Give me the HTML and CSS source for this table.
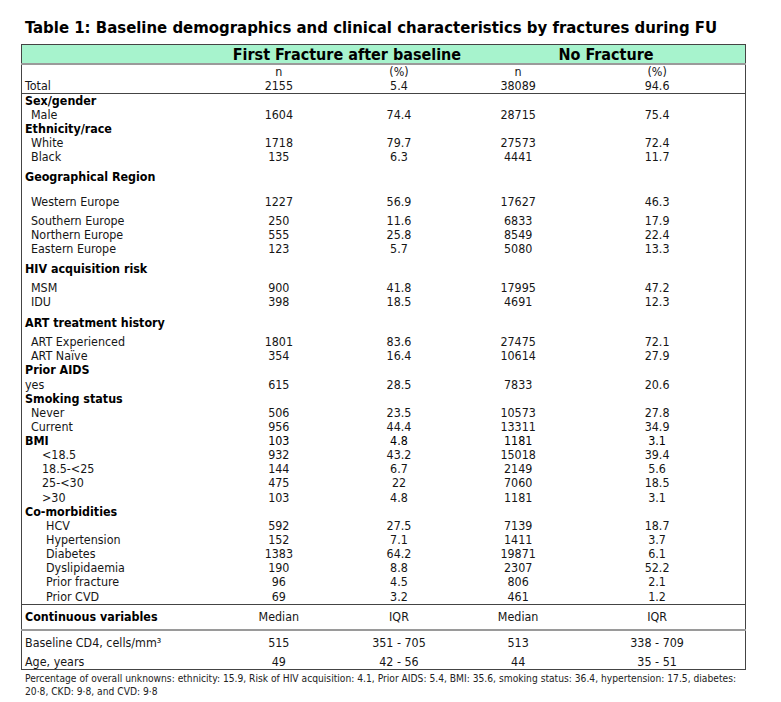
FILE: index.html
```html
<!DOCTYPE html>
<html>
<head>
<meta charset="utf-8">
<link rel="stylesheet" href="styles.css">
</head>
<body>
<div class="page">
  <h1 class="title">Table 1: Baseline demographics and clinical characteristics by fractures during FU</h1>
  <table class="tbl">
    <colgroup>
      <col class="c-label"><col class="c-n1"><col class="c-p1"><col class="c-n2"><col class="c-p2">
    </colgroup>
    <tr class="head">
      <td></td>
      <td colspan="2">First Fracture after baseline</td>
      <td colspan="2">No Fracture</td>
    </tr>
    <tr class="r14"><td></td><td>n</td><td>(%)</td><td>n</td><td>(%)</td></tr>
    <tr class="r14 total"><td class="lab">Total</td><td>2155</td><td>5.4</td><td>38089</td><td>94.6</td></tr>
    <tr class="r14 sec"><td class="lab">Sex/gender</td><td></td><td></td><td></td><td></td></tr>
    <tr class="r14"><td class="lab i1">Male</td><td>1604</td><td>74.4</td><td>28715</td><td>75.4</td></tr>
    <tr class="r14 sec"><td class="lab">Ethnicity/race</td><td></td><td></td><td></td><td></td></tr>
    <tr class="r14"><td class="lab i1">White</td><td>1718</td><td>79.7</td><td>27573</td><td>72.4</td></tr>
    <tr class="r20"><td class="lab i1">Black</td><td>135</td><td>6.3</td><td>4441</td><td>11.7</td></tr>
    <tr class="r25 sec"><td class="lab">Geographical Region</td><td></td><td></td><td></td><td></td></tr>
    <tr class="r19"><td class="lab i1">Western Europe</td><td>1227</td><td>56.9</td><td>17627</td><td>46.3</td></tr>
    <tr class="r14"><td class="lab i1">Southern Europe</td><td>250</td><td>11.6</td><td>6833</td><td>17.9</td></tr>
    <tr class="r14"><td class="lab i1">Northern Europe</td><td>555</td><td>25.8</td><td>8549</td><td>22.4</td></tr>
    <tr class="r20"><td class="lab i1">Eastern Europe</td><td>123</td><td>5.7</td><td>5080</td><td>13.3</td></tr>
    <tr class="r19 sec"><td class="lab">HIV acquisition risk</td><td></td><td></td><td></td><td></td></tr>
    <tr class="r14"><td class="lab i1">MSM</td><td>900</td><td>41.8</td><td>17995</td><td>47.2</td></tr>
    <tr class="r21"><td class="lab i1">IDU</td><td>398</td><td>18.5</td><td>4691</td><td>12.3</td></tr>
    <tr class="r19 sec"><td class="lab">ART treatment history</td><td></td><td></td><td></td><td></td></tr>
    <tr class="r14"><td class="lab i1">ART Experienced</td><td>1801</td><td>83.6</td><td>27475</td><td>72.1</td></tr>
    <tr class="r14"><td class="lab i1">ART Naïve</td><td>354</td><td>16.4</td><td>10614</td><td>27.9</td></tr>
    <tr class="r15 sec"><td class="lab">Prior AIDS</td><td></td><td></td><td></td><td></td></tr>
    <tr class="r14"><td class="lab">yes</td><td>615</td><td>28.5</td><td>7833</td><td>20.6</td></tr>
    <tr class="r14 sec"><td class="lab">Smoking status</td><td></td><td></td><td></td><td></td></tr>
    <tr class="r14"><td class="lab i1">Never</td><td>506</td><td>23.5</td><td>10573</td><td>27.8</td></tr>
    <tr class="r14"><td class="lab i1">Current</td><td>956</td><td>44.4</td><td>13311</td><td>34.9</td></tr>
    <tr class="r14 sec"><td class="lab">BMI</td><td>103</td><td>4.8</td><td>1181</td><td>3.1</td></tr>
    <tr class="r14"><td class="lab i2">&lt;18.5</td><td>932</td><td>43.2</td><td>15018</td><td>39.4</td></tr>
    <tr class="r14"><td class="lab i2">18.5-&lt;25</td><td>144</td><td>6.7</td><td>2149</td><td>5.6</td></tr>
    <tr class="r15"><td class="lab i2">25-&lt;30</td><td>475</td><td>22</td><td>7060</td><td>18.5</td></tr>
    <tr class="r14"><td class="lab i2">&gt;30</td><td>103</td><td>4.8</td><td>1181</td><td>3.1</td></tr>
    <tr class="r14 sec"><td class="lab">Co-morbidities</td><td></td><td></td><td></td><td></td></tr>
    <tr class="r14"><td class="lab i3">HCV</td><td>592</td><td>27.5</td><td>7139</td><td>18.7</td></tr>
    <tr class="r14"><td class="lab i3">Hypertension</td><td>152</td><td>7.1</td><td>1411</td><td>3.7</td></tr>
    <tr class="r14"><td class="lab i3">Diabetes</td><td>1383</td><td>64.2</td><td>19871</td><td>6.1</td></tr>
    <tr class="r14"><td class="lab i3">Dyslipidaemia</td><td>190</td><td>8.8</td><td>2307</td><td>52.2</td></tr>
    <tr class="r15"><td class="lab i3">Prior fracture</td><td>96</td><td>4.5</td><td>806</td><td>2.1</td></tr>
    <tr class="r14 lastcat"><td class="lab i3">Prior CVD</td><td>69</td><td>3.2</td><td>461</td><td>1.2</td></tr>
    <tr class="cont"><td class="lab sec">Continuous variables</td><td>Median</td><td>IQR</td><td>Median</td><td>IQR</td></tr>
    <tr class="cd4"><td class="lab">Baseline CD4, cells/mm³</td><td>515</td><td>351 - 705</td><td>513</td><td>338 - 709</td></tr>
    <tr class="age"><td class="lab">Age, years</td><td>49</td><td>42 - 56</td><td>44</td><td>35 - 51</td></tr>
  </table>
  <p class="note">Percentage of overall unknowns: ethnicity: 15.9, Risk of HIV acquisition: 4.1, Prior AIDS: 5.4, BMI: 35.6, smoking status: 36.4, hypertension: 17.5, diabetes: 20·8, CKD: 9·8, and CVD: 9·8</p>
</div>
</body>
</html>
```
FILE: styles.css
```css
html, body {
  margin: 0;
  padding: 0;
  background: #fff;
}
.page {
  padding-left: 21px;
  color: #161616;
  font-family: "DejaVu Sans Condensed", "DejaVu Sans", sans-serif;
  font-stretch: condensed;
}
.title {
  margin: 0;
  padding: 18px 0 0 4px;
  height: 44px;
  box-sizing: border-box;
  font-size: 16.6px;
  line-height: 20px;
  font-weight: bold;
  color: #000;
}
.tbl {
  border-collapse: collapse;
  table-layout: fixed;
  width: 725px;
  border: 1px solid #444;
  font-size: 12.4px;
}
.c-label { width: 205px; }
.c-n1 { width: 104px; }
.c-p1 { width: 136px; }
.c-n2 { width: 102px; }
.c-p2 { width: 176px; }
.tbl td {
  padding: 0;
  text-align: center;
  vertical-align: top;
  line-height: 14px;
  white-space: nowrap;
}
.tbl td.lab {
  text-align: left;
  padding-left: 3px;
}
.head td {
  background: #a7f3cd;
  height: 17px;
  padding-top: 1px;
  font-weight: bold;
  font-size: 16px;
  line-height: 17px;
  vertical-align: middle;
  color: #000;
  border-bottom: 2px solid #9a9a9a;
}
.r14 td { height: 14px; }
.r15 td { height: 15px; }
.r19 td { height: 19px; }
.r20 td { height: 20px; }
.r21 td { height: 21px; }
.r25 td { height: 25px; }
.total td { border-bottom: 1px solid #444; }
.sec, .sec td.lab { font-weight: bold; color: #000; }
.sec td:not(.lab) { font-weight: normal; }
.tbl td.i1 { padding-left: 9px; }
.tbl td.i2 { padding-left: 20px; }
.tbl td.i3 { padding-left: 24px; }
.lastcat td { border-bottom: 1px solid #444; }
.cont td {
  height: 24px;
  vertical-align: middle;
  border-bottom: 2px solid #9a9a9a;
}
.cont td.lab { font-weight: bold; }
.cd4 td {
  height: 24px;
  vertical-align: middle;
}
.age td {
  height: 14px;
  vertical-align: middle;
}
.note {
  margin: 2px 0 0 4px;
  width: 718px;
  font-size: 10.2px;
  line-height: 13px;
  color: #222;
}
```
